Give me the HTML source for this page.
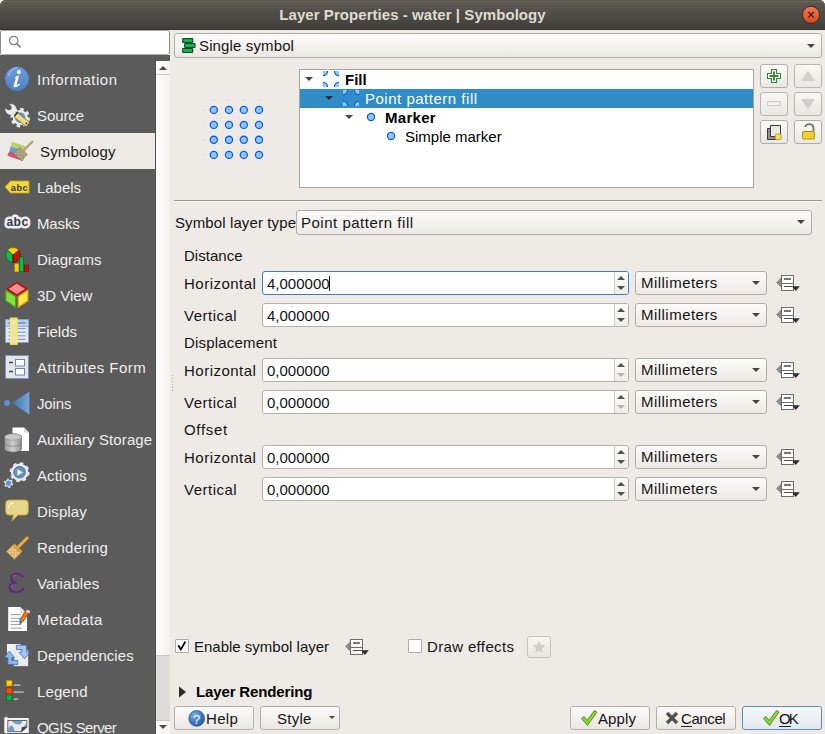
<!DOCTYPE html>
<html><head><meta charset="utf-8">
<style>
*{box-sizing:border-box;margin:0;padding:0}
html,body{width:825px;height:734px;overflow:hidden;background:#ffffff}
body{position:relative;font-family:"Liberation Sans",sans-serif;font-size:15px;color:#141414}
.a{position:absolute}
.t{position:absolute;line-height:17px;white-space:nowrap}
svg{position:absolute;overflow:visible}
#title{left:0;top:0;width:825px;height:30px;border-radius:6px 6px 0 0;background:linear-gradient(#5d5a52,#3f3e3a);box-shadow:inset 0 1px #57544c,inset 0 2px #6b675c,inset 0 -1px #363530;}
#title .tt{left:0;width:825px;text-align:center;top:6px;color:#dfdbd2;font-weight:bold}
#search{left:0;top:30px;width:170px;height:25px;background:#fff;border:1px solid #8e8c88;border-top:1px solid #a9a6a0;border-bottom-color:#b5b2ad;border-radius:2px 3px 3px 2px}
#side{left:0;top:55px;width:170px;height:679px;background:#5b5b5b}
.si{position:absolute;left:37px;color:#eeeeec;line-height:17px;white-space:nowrap}
#panel{left:170px;top:30px;width:655px;height:704px;background:#eeebe7}
.combo{position:absolute;border:1px solid #b1aea9;border-radius:3px;background:linear-gradient(#fcfcfb,#ebe9e5)}
.spin{position:absolute;border:1px solid #b4b1ac;border-radius:3px;background:#fff}
.btn{position:absolute;border:1px solid #b1aea9;border-radius:3px;background:linear-gradient(#fbfbfa,#e9e7e3)}
.arr{position:absolute;width:0;height:0;border-left:4px solid transparent;border-right:4px solid transparent;border-top:4px solid #444}
</style></head><body>
<div id="title" class="a"><div class="t tt" style="letter-spacing:0.06px">Layer Properties - water | Symbology</div>
<svg style="left:801px;top:5px" width="20" height="20" viewBox="0 0 20 20"><defs><linearGradient id="cg" x1="0" y1="0" x2="0" y2="1"><stop offset="0" stop-color="#f47b52"/><stop offset="1" stop-color="#d9461c"/></linearGradient></defs><circle cx="10" cy="9.8" r="8.6" fill="url(#cg)" stroke="#2e2c28" stroke-width="1"/><path d="M7.2 7L12.8 12.6M12.8 7L7.2 12.6" stroke="#2a1a10" stroke-width="1.1"/></svg>
</div>
<div id="side" class="a"></div>
<div class="a" style="left:0;top:133px;width:156px;height:36px;background:#eeebe7"></div>
<svg style="left:0;top:0" width="156" height="734" viewBox="0 0 156 734">
<defs>
<linearGradient id="infog" x1="0" y1="0" x2="0" y2="1"><stop offset="0" stop-color="#6d9ddb"/><stop offset="1" stop-color="#4f82c6"/></linearGradient>
<linearGradient id="joing" x1="0" y1="0" x2="1" y2="0"><stop offset="0" stop-color="#3f6fae"/><stop offset="1" stop-color="#79a6dc"/></linearGradient>
<linearGradient id="dbg" x1="0" y1="0" x2="1" y2="0"><stop offset="0" stop-color="#9a9a9a"/><stop offset="0.5" stop-color="#d0d0d0"/><stop offset="1" stop-color="#8a8a8a"/></linearGradient>
<pattern id="hatch" width="1.5" height="1.5" patternUnits="userSpaceOnUse"><rect width="1.5" height="1.5" fill="#9f9874"/><rect width="0.75" height="0.75" fill="#c4bd9c"/></pattern>
<pattern id="hatch2" width="1.5" height="1.5" patternUnits="userSpaceOnUse"><rect width="1.5" height="1.5" fill="#dfad66"/><rect width="0.75" height="0.75" fill="#f6dcaa"/></pattern>
</defs>
<!-- Information -->
<circle cx="16.9" cy="78.7" r="12" fill="url(#infog)" stroke="#4474b8" stroke-width="0.8"/>
<path d="M8.5 76 Q10 69 17 67.5" stroke="#9cc0ea" stroke-width="1.2" fill="none"/>
<circle cx="18.9" cy="72" r="2" fill="#fff"/>
<path d="M15.2 77.2 Q17 75.6 19.2 75.6 L16.6 84.6 Q18 84.8 19.6 83.6 L19.6 85 Q17 87.4 14.2 87.2 Q13.2 86.8 13.6 85.4 L15.9 78.2 Q15.4 78.1 14.8 78.4 Z" fill="#fff"/>
<!-- Source -->
<circle cx="20.2" cy="117.6" r="8.2" fill="none" stroke="#e9e9e9" stroke-width="3.2" stroke-dasharray="3.4 3.0"/>
<circle cx="20.2" cy="117.6" r="6.4" fill="#6f9ad0" stroke="#ececec" stroke-width="2.2"/>
<circle cx="10.9" cy="109.4" r="5.4" fill="#ececea" stroke="#c8c8c6" stroke-width="0.4"/>
<path d="M14 111.5 L16.8 114.8" stroke="#d8d8d6" stroke-width="3.2"/>
<circle cx="9" cy="107.6" r="2.7" fill="#5b5b5b"/>
<path d="M10.4 105.6 L7.8 102.2 L3.4 106.4 L6.6 109.2 Z" fill="#5b5b5b"/>
<path d="M15.6 114.6 L27.8 124.4" stroke="#7a6a28" stroke-width="6.2" stroke-linecap="butt"/>
<path d="M15.6 114.6 L27.8 124.4" stroke="#eddb80" stroke-width="5"/>
<path d="M14.4 116.2 L17.9 111.8" stroke="#222" stroke-width="1.4"/>
<circle cx="26.4" cy="123.4" r="1.1" fill="#333" stroke="#ddd" stroke-width="0.5"/>
<!-- Symbology -->
<path d="M12 141.8 L25.5 146.3 L23 160.8 L8.5 156 Z" fill="#b8d06e"/>
<path d="M10.6 146.8 L24.6 151.3 L23 160.8 L8.5 156 Z" fill="#5ea4da"/>
<path d="M9.4 151.4 L23.6 156 L22.8 161 L7.2 155.6 Z" fill="#d4506c"/>
<path d="M13.8 153.2 L19.6 147.4 L27.4 154.6 L21.4 160.8 Z" fill="url(#hatch)" stroke="#8a8462" stroke-width="0.6"/>
<path d="M22.6 151.6 L32.2 141.8" stroke="#b1a46c" stroke-width="2.3" stroke-linecap="round"/>
<!-- Labels -->
<path d="M5 187 L10.5 181 L29 181 L29 193 L10.5 193 Z" fill="#f3d83a" stroke="#caa400" stroke-width="0.8"/>
<text x="10.8" y="190.6" font-family="Liberation Sans" font-weight="bold" font-size="9.2" letter-spacing="0.5" fill="#363636">abc</text>
<!-- Masks -->
<text x="6.4" y="226.3" font-family="Liberation Sans" font-weight="bold" font-size="12" letter-spacing="0.5" fill="#3a3a3a" stroke="#eef0f8" stroke-width="5" stroke-linejoin="round" paint-order="stroke">abc</text>
<!-- Diagrams -->
<circle cx="13" cy="255" r="7.3" fill="#ffd200" stroke="#a08000" stroke-width="0.5"/>
<path d="M13 255 L7.6 250.1 A7.3 7.3 0 0 0 13 262.3 Z" fill="#0cba4e" stroke="#08602a" stroke-width="0.9" stroke-linejoin="round"/>
<path d="M13 255 L13 262.3 A7.3 7.3 0 0 0 18.6 250.4 Z" fill="#c81008" stroke="#5e0804" stroke-width="0.9" stroke-linejoin="round"/>
<rect x="14.8" y="263.8" width="4" height="8" fill="#ffcc00" stroke="#c89a00" stroke-width="0.5"/>
<rect x="19.6" y="257" width="4" height="14.8" fill="#0cba4e" stroke="#08602a" stroke-width="0.7"/>
<rect x="24.4" y="265" width="4.2" height="6.8" fill="#c81008" stroke="#701008" stroke-width="0.6"/>
<!-- 3D View -->
<path d="M16.7 282.6 L26.4 288.9 L16.9 295.2 L7.3 288.9 Z" fill="#f69090" stroke="#c80808" stroke-width="1.5" stroke-linejoin="round"/>
<path d="M5.8 290.3 L15.6 296.4 L15.6 307.3 L5.8 300.8 Z" fill="#88e03a" stroke="#4aa014" stroke-width="1.2" stroke-linejoin="round"/>
<path d="M18.2 296.4 L27.9 290.3 L27.9 300.8 L18.2 307.3 Z" fill="#ffe64a" stroke="#d8a800" stroke-width="1.2" stroke-linejoin="round"/>
<!-- Fields -->
<rect x="5.5" y="319.5" width="23" height="23" fill="#e6eaf0" stroke="#7fa2d0" stroke-width="1"/>
<rect x="6" y="320" width="22" height="6" fill="#b9d0ec"/>
<path d="M6 326.5h22" stroke="#8fb0da" stroke-width="1"/>
<path d="M8.5 323h17" stroke="#5f8ac4" stroke-width="1.4"/>
<path d="M8.5 328.6h17M8.5 332.2h17M8.5 335.8h17M8.5 339.4h17" stroke="#5f8ac4" stroke-width="0.9"/>
<rect x="10.6" y="318.2" width="6.4" height="26" fill="#ece2b0" stroke="#f8f03a" stroke-width="1.3"/>
<circle cx="13.7" cy="322.8" r="0.9" fill="#fff"/>
<!-- Attributes Form -->
<rect x="5.5" y="355.5" width="23" height="23" fill="#e5e5e5" stroke="#7496c6" stroke-width="1"/>
<rect x="15.5" y="359.5" width="9" height="6.5" fill="#fff" stroke="#5d8ac4" stroke-width="1"/>
<rect x="15.5" y="368.5" width="9" height="6.5" fill="#fff" stroke="#5d8ac4" stroke-width="1"/>
<path d="M9 362.5h4M9 371.5h4" stroke="#2c4a6a" stroke-width="1.6"/>
<!-- Joins -->
<circle cx="7" cy="403" r="3" fill="#5d8fcf"/>
<path d="M12 403 L29.3 391.5 L29.3 414.5 Z" fill="url(#joing)"/>
<!-- Aux storage -->
<path d="M12.5 427.5 L24 427.5 L29 432.5 L29 451 L12.5 451 Z" fill="#ffffff"/>
<path d="M24 427.5 L24 432.5 L29 432.5" fill="#dcdcdc"/>
<path d="M4.5 437 a8.5 3.2 0 0 1 17 0 L21.5 449 a8.5 3.2 0 0 1 -17 0 Z" fill="url(#dbg)" stroke="#5f5f5f" stroke-width="0.6"/>
<ellipse cx="13" cy="437" rx="8.5" ry="3.2" fill="#c8c8c8" stroke="#777" stroke-width="0.5"/>
<path d="M4.5 443 a8.5 3.2 0 0 0 17 0" fill="none" stroke="#777" stroke-width="0.6"/>
<!-- Actions -->
<circle cx="19.6" cy="472.2" r="9.1" fill="none" stroke="#e8e8e8" stroke-width="1.8" stroke-dasharray="3.6 3.55"/>
<circle cx="19.6" cy="472.2" r="7.2" fill="none" stroke="#ececec" stroke-width="3"/>
<circle cx="19.6" cy="472.2" r="5.9" fill="#5e92d0" stroke="#3a5a88" stroke-width="0.6"/>
<path d="M17.4 469.2 L23 472.4 L17.4 475.6 Z" fill="#fff"/>
<circle cx="8.5" cy="483.2" r="4.2" fill="none" stroke="#e0e0e0" stroke-width="1.1" stroke-dasharray="2.2 2.2"/>
<circle cx="8.5" cy="483.2" r="3.2" fill="#5e92d0" stroke="#e8e8e8" stroke-width="1"/>
<!-- Display -->
<path d="M9 500 L25 500 Q28.3 500 28.3 503.5 L28.3 511.5 Q28.3 515 25 515 L18 515 L12 521 L13.5 515 L9 515 Q5.7 515 5.7 511.5 L5.7 503.5 Q5.7 500 9 500 Z" fill="#e4d88a" stroke="#c7a42a" stroke-width="0.9"/>
<path d="M8.5 508 Q8.5 503 14 503" stroke="#fff" stroke-width="1.2" fill="none"/>
<!-- Rendering -->
<path d="M18.6 546.6 L27.2 538" stroke="#b57a22" stroke-width="3.6" stroke-linecap="round"/>
<path d="M18.6 546.6 L27.2 538" stroke="#e7ad4e" stroke-width="2.4" stroke-linecap="round"/>
<path d="M6.4 551.4 L13.2 544.8 L21.2 552.6 L14.4 559.4 Z" fill="url(#hatch2)" stroke="#c48a34" stroke-width="0.7"/>
<path d="M12.6 545.4 L14.4 543.6 L22.4 551.4 L20.6 553.2 Z" fill="#e2a445" stroke="#b57a22" stroke-width="0.6"/>
<!-- Variables -->
<path d="M22.8 576.6 Q20.5 573.6 16.5 573.8 Q11 574.3 11.2 578.4 Q11.6 582.3 16.8 582.6 Q9.6 582.8 9.6 587.4 Q9.8 591.9 15.8 592 Q21 592.1 23.6 588.6" fill="none" stroke="#5f2a80" stroke-width="2.2" stroke-linecap="round"/><path d="M13 576.5 Q14 575.5 15.5 575.3 M11.3 587 Q11.6 585.5 12.6 585" stroke="#b080c8" stroke-width="0.8" fill="none"/>
<!-- Metadata -->
<path d="M8.2 607 L20.2 607 L27 613.8 L27 631 L8.2 631 Z" fill="#ffffff"/>
<path d="M20.2 607 L20.2 612 Q20.2 613.8 22 613.8 L27 613.8 Z" fill="#dcdcdc"/>
<path d="M10.6 614.6h10.5M10.6 618.2h9.5M10.6 621.4h9M10.6 624.6h10.5M10.6 628.2h11.5" stroke="#8f8f8f" stroke-width="0.9"/>
<path d="M21.2 620.8 L27.8 611.2" stroke="#7a3a10" stroke-width="4.4"/>
<path d="M21.2 620.8 L27.8 611.2" stroke="#ec7b1e" stroke-width="3.2"/>
<path d="M26.6 610.4 L29.8 612.6" stroke="#f4d8d8" stroke-width="2.4"/>
<path d="M19.6 619.6 L22.9 621.9 L19.3 625.3 Z" fill="#6a6a6a"/>
<!-- Dependencies -->
<rect x="7" y="644" width="13.5" height="14" fill="#f0f0f0"/>
<rect x="14" y="650.5" width="14" height="15.5" fill="#ececec" stroke="#d8d8d8" stroke-width="0.4"/>
<path d="M4.2 657.6 L9.4 651.2 L14.6 657.6 L11.8 657.6 L11.8 660.3 L17.7 660.3 L17.7 664.6 L7.9 664.6 L7.9 657.6 Z" fill="#8db4ec" stroke="#3f6fb8" stroke-width="0.8" stroke-linejoin="round"/>
<path d="M16.4 645.2 L26.6 645.2 L26.6 652.3 L29.8 652.3 L24.5 658.8 L19 652.3 L21.8 652.3 L21.8 649.5 L16.4 649.5 Z" fill="#a6c5f2" stroke="#3f6fb8" stroke-width="0.8" stroke-linejoin="round"/>
<!-- Legend -->
<rect x="6.5" y="680.5" width="5.5" height="5.5" fill="#ffcc00" stroke="#c08a00" stroke-width="0.6"/>
<rect x="6.5" y="688" width="5.5" height="5.5" fill="#ff4a00" stroke="#a02a00" stroke-width="0.6"/>
<rect x="6.5" y="695" width="5.5" height="5.5" fill="#12b040" stroke="#0a6020" stroke-width="0.6"/>
<path d="M13.6 685.2h6.8M13.6 692.2h10.2M13.6 699.2h4.6" stroke="#a9a9a9" stroke-width="1.8"/>
<!-- QGIS Server -->
<path d="M6 718 L28.8 718 L28.8 733 L6 733 Z" fill="#f2f2f2"/>
<rect x="4.4" y="717" width="3.4" height="16.3" rx="1.6" fill="#fafafa" stroke="#d0d0d0" stroke-width="0.5"/>
<path d="M7.8 720.5 L26.8 720.5 L26.8 727 L21.5 731.6 L7.8 731.6 Z" fill="#ececec" stroke="#555" stroke-width="0.9"/>
<path d="M12 720.9 L22.5 720.9 Q21.5 724.8 18 724.6 Q15 724.4 13.5 722.8 Q12.5 721.8 12 720.9 Z" fill="#6e9fd8"/>
<path d="M8.2 731.2 L8.2 729 Q10 725 11.8 725.6 Q13.6 726.5 14.6 731.2 Z" fill="#6e9fd8"/>
<path d="M26.4 723.8 Q24.3 724.3 24.2 726.4 L25.5 727 L26.4 726.2 Z" fill="#6e9fd8"/>
<path d="M21.5 731.6 L22 727.3 L26.8 727 Z" fill="#444" stroke="#333" stroke-width="0.6"/>
</svg>
<div class="si" style="top:71px;letter-spacing:0.5px">Information</div>
<div class="si" style="top:107px;letter-spacing:-0.08px">Source</div>
<div class="si" style="top:143px;left:40px;color:#1a1a1a;letter-spacing:0.16px">Symbology</div>
<div class="si" style="top:179px;letter-spacing:-0.04px">Labels</div>
<div class="si" style="top:215px;letter-spacing:-0.15px">Masks</div>
<div class="si" style="top:251px;letter-spacing:0.04px">Diagrams</div>
<div class="si" style="top:287px;letter-spacing:-0.05px">3D View</div>
<div class="si" style="top:323px">Fields</div>
<div class="si" style="top:359px;letter-spacing:0.44px">Attributes Form</div>
<div class="si" style="top:395px;letter-spacing:-0.15px">Joins</div>
<div class="si" style="top:431px;letter-spacing:0.11px">Auxiliary Storage</div>
<div class="si" style="top:467px;letter-spacing:0.1px">Actions</div>
<div class="si" style="top:503px;letter-spacing:0.08px">Display</div>
<div class="si" style="top:539px;letter-spacing:0.2px">Rendering</div>
<div class="si" style="top:575px;letter-spacing:0.1px">Variables</div>
<div class="si" style="top:611px;letter-spacing:0.4px">Metadata</div>
<div class="si" style="top:647px;letter-spacing:0.07px">Dependencies</div>
<div class="si" style="top:683px;letter-spacing:0.1px">Legend</div>
<div class="si" style="top:719px;letter-spacing:-0.6px">QGIS Server</div>
<!-- scrollbar -->
<div class="a" style="left:155px;top:61px;width:1px;height:673px;background:#4e4e4e"></div>
<div class="a" style="left:156px;top:61px;width:14px;height:14px;background:linear-gradient(90deg,#fdfdfc,#f4f3f1);border-bottom:1px solid #c9c6c1"></div>
<div class="arr" style="left:159px;top:66px;border-top:none;border-bottom:4px solid #4a4a4a"></div>
<div class="a" style="left:156px;top:75px;width:14px;height:580px;background:linear-gradient(90deg,#ffffff,#f3f2f0)"></div>
<div class="a" style="left:156px;top:655px;width:14px;height:65px;background:#dedcd8;border-top:1px solid #c9c6c1"></div>
<div class="a" style="left:156px;top:720px;width:14px;height:14px;background:linear-gradient(90deg,#fdfdfc,#f4f3f1);border-top:1px solid #c9c6c1"></div>
<div class="arr" style="left:159px;top:725px;border-top-color:#4a4a4a"></div>

<div id="search" class="a"><svg style="left:7px;top:4px" width="14" height="14" viewBox="0 0 14 14"><circle cx="5.7" cy="5.5" r="4.2" fill="none" stroke="#7d7d7d" stroke-width="1.2"/><path d="M8.6 8.6L12.6 12.4" stroke="#7d7d7d" stroke-width="1.5"/></svg></div>
<div id="panel" class="a"></div>
<svg style="left:171px;top:374px" width="3" height="19" viewBox="0 0 3 19"><g fill="#a9a6a1"><rect x="1" y="1" width="1" height="1"/><rect x="1" y="4" width="1" height="1"/><rect x="1" y="7" width="1" height="1"/><rect x="1" y="10" width="1" height="1"/><rect x="1" y="13" width="1" height="1"/><rect x="1" y="16" width="1" height="1"/></g></svg>
<!-- renderer combo -->
<div class="combo" style="left:174px;top:33px;width:648px;height:25px"></div>
<svg style="left:182px;top:38px" width="14" height="15" viewBox="0 0 14 15"><rect x="0.7" y="0.7" width="10" height="3.6" rx="0.6" fill="#14c45a" stroke="#0d4d26" stroke-width="1.2"/><rect x="2.7" y="5.7" width="10.3" height="3.6" rx="0.6" fill="#14c45a" stroke="#0d4d26" stroke-width="1.2"/><rect x="0.7" y="10.7" width="10" height="3.6" rx="0.6" fill="#14c45a" stroke="#0d4d26" stroke-width="1.2"/></svg>
<div class="t" style="left:199px;top:37px;letter-spacing:0.13px">Single symbol</div>
<div class="arr" style="left:807px;top:44px"></div>
<!-- preview -->
<svg style="left:200px;top:95px" width="75" height="75" viewBox="0 0 75 75">
<g fill="#80cfff" stroke="#1c4ff2" stroke-width="1.3"><circle cx="13.8" cy="14.9" r="3.55"/><circle cx="29.0" cy="14.9" r="3.55"/><circle cx="43.8" cy="14.9" r="3.55"/><circle cx="59.0" cy="14.9" r="3.55"/><circle cx="13.8" cy="29.9" r="3.55"/><circle cx="29.0" cy="29.9" r="3.55"/><circle cx="43.8" cy="29.9" r="3.55"/><circle cx="59.0" cy="29.9" r="3.55"/><circle cx="13.8" cy="44.8" r="3.55"/><circle cx="29.0" cy="44.8" r="3.55"/><circle cx="43.8" cy="44.8" r="3.55"/><circle cx="59.0" cy="44.8" r="3.55"/><circle cx="13.8" cy="59.9" r="3.55"/><circle cx="29.0" cy="59.9" r="3.55"/><circle cx="43.8" cy="59.9" r="3.55"/><circle cx="59.0" cy="59.9" r="3.55"/></g>
<g stroke="#cdd3ea" stroke-width="1"><path d="M12.8 4.5 h2"/><path d="M28.0 4.5 h2"/><path d="M42.8 4.5 h2"/><path d="M58.0 4.5 h2"/><path d="M3.5 13.9 v2"/><path d="M3.5 28.9 v2"/><path d="M3.5 43.8 v2"/><path d="M3.5 58.9 v2"/></g>
</svg>
<!-- tree -->
<div class="a" style="left:299px;top:69px;width:455px;height:119px;background:#fff;border:1px solid #a9a6a1"></div>
<div class="a" style="left:300px;top:89px;width:453px;height:19px;background:#308cc6"></div>
<div class="arr" style="left:305px;top:77px;border-left-width:4.5px;border-right-width:4.5px"></div>
<svg style="left:323px;top:71px;overflow:hidden" width="16" height="16" viewBox="0 0 16 16"><g fill="#80cfff" stroke="#1c4ff2" stroke-width="1.2"><circle cx="0" cy="0" r="4.6"/><circle cx="16" cy="0" r="4.6"/><circle cx="0" cy="16" r="4.6"/><circle cx="16" cy="16" r="4.6"/></g></svg>
<div class="t" style="left:345px;top:71px;font-weight:bold;color:#000">Fill</div>
<div class="arr" style="left:325px;top:96px;border-left-width:4.5px;border-right-width:4.5px;border-top-color:#1e2a33"></div>
<svg style="left:343px;top:90px;overflow:hidden" width="16" height="16" viewBox="0 0 16 16"><g fill="#80cfff" stroke="#1c4ff2" stroke-width="1.2"><circle cx="0" cy="0" r="4.6"/><circle cx="16" cy="0" r="4.6"/><circle cx="0" cy="16" r="4.6"/><circle cx="16" cy="16" r="4.6"/></g></svg>
<div class="t" style="left:365px;top:90px;color:#fff;letter-spacing:0.51px">Point pattern fill</div>
<div class="arr" style="left:345px;top:115px;border-left-width:4.5px;border-right-width:4.5px"></div>
<svg style="left:365px;top:111px" width="12" height="12" viewBox="0 0 12 12"><circle cx="6" cy="6" r="3.6" fill="#80cfff" stroke="#1c4ff2" stroke-width="1.2"/></svg>
<div class="t" style="left:385px;top:109px;font-weight:bold;color:#000;letter-spacing:0.3px">Marker</div>
<svg style="left:385px;top:130px" width="12" height="12" viewBox="0 0 12 12"><circle cx="6" cy="6" r="3.6" fill="#80cfff" stroke="#1c4ff2" stroke-width="1.2"/></svg>
<div class="t" style="left:405px;top:128px;color:#000">Simple marker</div>
<!-- side buttons -->
<div class="btn" style="left:760px;top:64px;width:28px;height:24px"></div>
<svg style="left:766px;top:68px" width="16" height="16" viewBox="0 0 16 16"><path d="M5.5 1.5H10.5V5.5H14.5V10.5H10.5V14.5H5.5V10.5H1.5V5.5H5.5Z" fill="#fff" stroke="#3a843a" stroke-width="1.1"/><path d="M8 3.5V12.5M3.5 8H12.5" stroke="#3a873a" stroke-width="1.9"/></svg>
<div class="btn" style="left:794px;top:64px;width:28px;height:24px;opacity:.85"></div>
<svg style="left:798px;top:69px" width="20" height="14" viewBox="0 0 20 14"><path d="M10 1.5 L17 12 L3 12 Z" fill="#d3d0cb"/></svg>
<div class="btn" style="left:760px;top:92px;width:28px;height:24px;opacity:.85"></div>
<svg style="left:767px;top:100px" width="14" height="8" viewBox="0 0 14 8"><rect x="0.5" y="1.5" width="13" height="4" fill="#f4efef" stroke="#d9c6c6" stroke-width="1"/></svg>
<div class="btn" style="left:794px;top:92px;width:28px;height:24px;opacity:.85"></div>
<svg style="left:798px;top:97px" width="20" height="14" viewBox="0 0 20 14"><path d="M3 2 L17 2 L10 12.5 Z" fill="#d3d0cb"/></svg>
<div class="btn" style="left:760px;top:120px;width:28px;height:24px"></div>
<svg style="left:766px;top:124px" width="16" height="16" viewBox="0 0 16 16"><path d="M1.5 4.5H11.5V15.5H1.5Z" fill="#8f8f88" stroke="#3a3a3a" stroke-width="1"/><path d="M4.5 1.5H14.5V12.5H4.5Z" fill="#e9e9e6" stroke="#3a3a3a" stroke-width="1"/><rect x="9.5" y="10" width="5.5" height="5.5" rx="0.8" fill="#f2dc74" stroke="#c9a400" stroke-width="1"/></svg>
<div class="btn" style="left:794px;top:120px;width:28px;height:24px"></div>
<svg style="left:801px;top:123px" width="16" height="18" viewBox="0 0 16 18"><path d="M4.2 4 Q5 1.2 8.5 1.2 Q12.2 1.4 12.5 5 V8.5" fill="none" stroke="#6f6f6f" stroke-width="1.8"/><path d="M5 3.8 Q6 2.2 8.5 2.2" fill="none" stroke="#e8e8e8" stroke-width="0.7"/><rect x="1.5" y="8.5" width="12" height="7.5" rx="1.5" fill="#f0d22e" stroke="#b39000" stroke-width="1"/></svg>
<!-- separator -->
<div class="a" style="left:174px;top:200px;width:648px;height:1px;background:#9c9994"></div>
<div class="a" style="left:174px;top:201px;width:648px;height:1px;background:#ffffff"></div>
<!-- symbol layer type -->
<div class="t" style="left:175px;top:214px;letter-spacing:0.11px">Symbol layer type</div>
<div class="combo" style="left:296px;top:210px;width:516px;height:25px"></div>
<div class="t" style="left:301px;top:214px;letter-spacing:0.51px">Point pattern fill</div>
<div class="arr" style="left:797px;top:220px"></div>
<div class="t" style="left:184px;top:247px;letter-spacing:0.03px">Distance</div><div class="t" style="left:184px;top:275px;letter-spacing:0.49px">Horizontal</div><div class="spin" style="left:262px;top:271px;width:367px;height:24px;border-color:#3a7fc1"></div><div class="a" style="left:614px;top:272px;width:1px;height:22px;background:#cfccc7"></div><div class="a" style="left:615px;top:272px;width:13px;height:22px;background:linear-gradient(#fbfbfa,#f0eeeb);border-radius:0 2px 2px 0"></div><div class="arr" style="left:617px;top:276px;border-top:none;border-bottom:4px solid #505050"></div><div class="arr" style="left:617px;top:286px;border-top:4px solid #505050"></div><div class="t" style="left:267px;top:275px">4,000000</div><div class="a" style="left:329px;top:276px;width:1px;height:15px;background:#111"></div><div class="combo" style="left:635px;top:271px;width:132px;height:24px"></div><div class="t" style="left:641px;top:274px;letter-spacing:0.47px">Millimeters</div><div class="arr" style="left:752px;top:281px"></div><svg style="left:776px;top:275px" width="25" height="17" viewBox="0 0 25 17"><path d="M0.5 7.5 L5.5 2.5 L5.5 12.5 Z" fill="#8d8d8d" stroke="#6a6a6a" stroke-width="0.5"/><rect x="5.5" y="0.5" width="12" height="15" fill="#fff" stroke="#6d6d6d" stroke-width="1"/><path d="M5.5 8.5h12" stroke="#6d6d6d" stroke-width="1"/><path d="M8 4h7" stroke="#4a4a4a" stroke-width="1.5"/><path d="M8 11.5h8" stroke="#4a4a4a" stroke-width="1"/><path d="M15.8 11.3 L23.8 11.3 L19.8 16 Z" fill="#2e2e2e"/></svg><div class="t" style="left:184px;top:307px;letter-spacing:0.5px">Vertical</div><div class="spin" style="left:262px;top:303px;width:367px;height:24px;border-color:#b4b1ac"></div><div class="a" style="left:614px;top:304px;width:1px;height:22px;background:#cfccc7"></div><div class="a" style="left:615px;top:304px;width:13px;height:22px;background:linear-gradient(#fbfbfa,#f0eeeb);border-radius:0 2px 2px 0"></div><div class="arr" style="left:617px;top:308px;border-top:none;border-bottom:4px solid #505050"></div><div class="arr" style="left:617px;top:318px;border-top:4px solid #505050"></div><div class="t" style="left:267px;top:307px">4,000000</div><div class="combo" style="left:635px;top:303px;width:132px;height:24px"></div><div class="t" style="left:641px;top:306px;letter-spacing:0.47px">Millimeters</div><div class="arr" style="left:752px;top:313px"></div><svg style="left:776px;top:307px" width="25" height="17" viewBox="0 0 25 17"><path d="M0.5 7.5 L5.5 2.5 L5.5 12.5 Z" fill="#8d8d8d" stroke="#6a6a6a" stroke-width="0.5"/><rect x="5.5" y="0.5" width="12" height="15" fill="#fff" stroke="#6d6d6d" stroke-width="1"/><path d="M5.5 8.5h12" stroke="#6d6d6d" stroke-width="1"/><path d="M8 4h7" stroke="#4a4a4a" stroke-width="1.5"/><path d="M8 11.5h8" stroke="#4a4a4a" stroke-width="1"/><path d="M15.8 11.3 L23.8 11.3 L19.8 16 Z" fill="#2e2e2e"/></svg><div class="t" style="left:184px;top:334px;letter-spacing:0.18px">Displacement</div><div class="t" style="left:184px;top:362px;letter-spacing:0.49px">Horizontal</div><div class="spin" style="left:262px;top:358px;width:367px;height:24px;border-color:#b4b1ac"></div><div class="a" style="left:614px;top:359px;width:1px;height:22px;background:#cfccc7"></div><div class="a" style="left:615px;top:359px;width:13px;height:22px;background:linear-gradient(#fbfbfa,#f0eeeb);border-radius:0 2px 2px 0"></div><div class="arr" style="left:617px;top:363px;border-top:none;border-bottom:4px solid #505050"></div><div class="arr" style="left:617px;top:373px;border-top:4px solid #b5b3ae"></div><div class="t" style="left:267px;top:362px">0,000000</div><div class="combo" style="left:635px;top:358px;width:132px;height:24px"></div><div class="t" style="left:641px;top:361px;letter-spacing:0.47px">Millimeters</div><div class="arr" style="left:752px;top:368px"></div><svg style="left:776px;top:362px" width="25" height="17" viewBox="0 0 25 17"><path d="M0.5 7.5 L5.5 2.5 L5.5 12.5 Z" fill="#8d8d8d" stroke="#6a6a6a" stroke-width="0.5"/><rect x="5.5" y="0.5" width="12" height="15" fill="#fff" stroke="#6d6d6d" stroke-width="1"/><path d="M5.5 8.5h12" stroke="#6d6d6d" stroke-width="1"/><path d="M8 4h7" stroke="#4a4a4a" stroke-width="1.5"/><path d="M8 11.5h8" stroke="#4a4a4a" stroke-width="1"/><path d="M15.8 11.3 L23.8 11.3 L19.8 16 Z" fill="#2e2e2e"/></svg><div class="t" style="left:184px;top:394px;letter-spacing:0.5px">Vertical</div><div class="spin" style="left:262px;top:390px;width:367px;height:24px;border-color:#b4b1ac"></div><div class="a" style="left:614px;top:391px;width:1px;height:22px;background:#cfccc7"></div><div class="a" style="left:615px;top:391px;width:13px;height:22px;background:linear-gradient(#fbfbfa,#f0eeeb);border-radius:0 2px 2px 0"></div><div class="arr" style="left:617px;top:395px;border-top:none;border-bottom:4px solid #505050"></div><div class="arr" style="left:617px;top:405px;border-top:4px solid #b5b3ae"></div><div class="t" style="left:267px;top:394px">0,000000</div><div class="combo" style="left:635px;top:390px;width:132px;height:24px"></div><div class="t" style="left:641px;top:393px;letter-spacing:0.47px">Millimeters</div><div class="arr" style="left:752px;top:400px"></div><svg style="left:776px;top:394px" width="25" height="17" viewBox="0 0 25 17"><path d="M0.5 7.5 L5.5 2.5 L5.5 12.5 Z" fill="#8d8d8d" stroke="#6a6a6a" stroke-width="0.5"/><rect x="5.5" y="0.5" width="12" height="15" fill="#fff" stroke="#6d6d6d" stroke-width="1"/><path d="M5.5 8.5h12" stroke="#6d6d6d" stroke-width="1"/><path d="M8 4h7" stroke="#4a4a4a" stroke-width="1.5"/><path d="M8 11.5h8" stroke="#4a4a4a" stroke-width="1"/><path d="M15.8 11.3 L23.8 11.3 L19.8 16 Z" fill="#2e2e2e"/></svg><div class="t" style="left:184px;top:421px;letter-spacing:0.68px">Offset</div><div class="t" style="left:184px;top:449px;letter-spacing:0.49px">Horizontal</div><div class="spin" style="left:262px;top:445px;width:367px;height:24px;border-color:#b4b1ac"></div><div class="a" style="left:614px;top:446px;width:1px;height:22px;background:#cfccc7"></div><div class="a" style="left:615px;top:446px;width:13px;height:22px;background:linear-gradient(#fbfbfa,#f0eeeb);border-radius:0 2px 2px 0"></div><div class="arr" style="left:617px;top:450px;border-top:none;border-bottom:4px solid #505050"></div><div class="arr" style="left:617px;top:460px;border-top:4px solid #505050"></div><div class="t" style="left:267px;top:449px">0,000000</div><div class="combo" style="left:635px;top:445px;width:132px;height:24px"></div><div class="t" style="left:641px;top:448px;letter-spacing:0.47px">Millimeters</div><div class="arr" style="left:752px;top:455px"></div><svg style="left:776px;top:449px" width="25" height="17" viewBox="0 0 25 17"><path d="M0.5 7.5 L5.5 2.5 L5.5 12.5 Z" fill="#8d8d8d" stroke="#6a6a6a" stroke-width="0.5"/><rect x="5.5" y="0.5" width="12" height="15" fill="#fff" stroke="#6d6d6d" stroke-width="1"/><path d="M5.5 8.5h12" stroke="#6d6d6d" stroke-width="1"/><path d="M8 4h7" stroke="#4a4a4a" stroke-width="1.5"/><path d="M8 11.5h8" stroke="#4a4a4a" stroke-width="1"/><path d="M15.8 11.3 L23.8 11.3 L19.8 16 Z" fill="#2e2e2e"/></svg><div class="t" style="left:184px;top:481px;letter-spacing:0.5px">Vertical</div><div class="spin" style="left:262px;top:477px;width:367px;height:24px;border-color:#b4b1ac"></div><div class="a" style="left:614px;top:478px;width:1px;height:22px;background:#cfccc7"></div><div class="a" style="left:615px;top:478px;width:13px;height:22px;background:linear-gradient(#fbfbfa,#f0eeeb);border-radius:0 2px 2px 0"></div><div class="arr" style="left:617px;top:482px;border-top:none;border-bottom:4px solid #505050"></div><div class="arr" style="left:617px;top:492px;border-top:4px solid #505050"></div><div class="t" style="left:267px;top:481px">0,000000</div><div class="combo" style="left:635px;top:477px;width:132px;height:24px"></div><div class="t" style="left:641px;top:480px;letter-spacing:0.47px">Millimeters</div><div class="arr" style="left:752px;top:487px"></div><svg style="left:776px;top:481px" width="25" height="17" viewBox="0 0 25 17"><path d="M0.5 7.5 L5.5 2.5 L5.5 12.5 Z" fill="#8d8d8d" stroke="#6a6a6a" stroke-width="0.5"/><rect x="5.5" y="0.5" width="12" height="15" fill="#fff" stroke="#6d6d6d" stroke-width="1"/><path d="M5.5 8.5h12" stroke="#6d6d6d" stroke-width="1"/><path d="M8 4h7" stroke="#4a4a4a" stroke-width="1.5"/><path d="M8 11.5h8" stroke="#4a4a4a" stroke-width="1"/><path d="M15.8 11.3 L23.8 11.3 L19.8 16 Z" fill="#2e2e2e"/></svg>
<!-- bottom -->
<div class="a" style="left:175px;top:639px;width:14px;height:14px;background:#fff;border:1px solid #aeaba6;border-radius:1px"></div>
<svg style="left:176px;top:640px" width="12" height="12" viewBox="0 0 12 12"><path d="M2.3 5.2 L4.8 9.6 L9.3 1.6" fill="none" stroke="#000" stroke-width="1.8" stroke-linejoin="round"/></svg>
<div class="t" style="left:194px;top:638px">Enable symbol layer</div>
<svg style="left:345px;top:639px" width="25" height="17" viewBox="0 0 25 17"><path d="M0.5 7.5 L5.5 2.5 L5.5 12.5 Z" fill="#8d8d8d" stroke="#6a6a6a" stroke-width="0.5"/><rect x="5.5" y="0.5" width="12" height="15" fill="#fff" stroke="#6d6d6d" stroke-width="1"/><path d="M5.5 8.5h12" stroke="#6d6d6d" stroke-width="1"/><path d="M8 4h7" stroke="#4a4a4a" stroke-width="1.5"/><path d="M8 11.5h8" stroke="#4a4a4a" stroke-width="1"/><path d="M15.8 11.3 L23.8 11.3 L19.8 16 Z" fill="#2e2e2e"/></svg>
<div class="a" style="left:408px;top:639px;width:14px;height:14px;background:#fff;border:1px solid #aeaba6;border-radius:1px"></div>
<div class="t" style="left:427px;top:638px;letter-spacing:0.35px">Draw effects</div>
<div class="btn" style="left:527px;top:636px;width:24px;height:22px;background:linear-gradient(#f7f6f4,#e8e6e2);border-color:#c6c3be"></div>
<svg style="left:531px;top:639px" width="16" height="16" viewBox="0 0 16 16"><path d="M8 1.5 L9.9 5.8 L14.5 6.2 L11 9.2 L12 13.8 L8 11.4 L4 13.8 L5 9.2 L1.5 6.2 L6.1 5.8 Z" fill="#d2cfc5"/></svg>
<svg style="left:178px;top:686px" width="9" height="12" viewBox="0 0 9 12"><path d="M1 0.5 L8 6 L1 11.5 Z" fill="#2a2a2a"/></svg>
<div class="t" style="left:196px;top:683px;font-weight:bold;color:#000;letter-spacing:-0.14px">Layer Rendering</div>
<div class="btn" style="left:174px;top:706px;width:80px;height:24px"></div>
<svg style="left:188px;top:710px" width="17" height="17" viewBox="0 0 17 17"><defs><radialGradient id="hg" cx="0.35" cy="0.3" r="0.8"><stop offset="0" stop-color="#7db0e6"/><stop offset="0.6" stop-color="#3b76be"/><stop offset="1" stop-color="#25558f"/></radialGradient></defs><circle cx="8.7" cy="8.4" r="7.9" fill="url(#hg)" stroke="#23508a" stroke-width="0.7"/><text x="4.9" y="13.6" font-family="Liberation Sans" font-size="13" fill="#fff">?</text></svg>
<div class="t" style="left:206px;top:710px;letter-spacing:0.33px">Help</div>
<div class="btn" style="left:260px;top:706px;width:80px;height:24px"></div>
<div class="t" style="left:277px;top:710px;letter-spacing:0.25px">Style</div>
<div class="arr" style="left:328.5px;top:716px;border-left-width:3.5px;border-right-width:3.5px;border-top-width:3.5px"></div>
<div class="btn" style="left:570px;top:706px;width:80px;height:24px"></div>
<svg style="left:580px;top:709px" width="18" height="18" viewBox="0 0 18 18"><path d="M1.5 9.5 L4 7.5 L7 11.5 L14.5 1.5 L17 3 L7.5 16.5 Z" fill="#8fd13a" stroke="#4a8a10" stroke-width="0.9" stroke-linejoin="round"/></svg>
<div class="t" style="left:598px;top:710px;letter-spacing:0.12px">Apply</div>
<div class="btn" style="left:656px;top:706px;width:80px;height:24px"></div>
<svg style="left:665px;top:711px" width="14" height="14" viewBox="0 0 14 14"><path d="M2 2 L12 12 M12 2 L2 12" stroke="#505050" stroke-width="3.2"/></svg>
<div class="t" style="left:681px;top:710px;letter-spacing:-0.4px">Cancel</div>
<div class="a" style="left:681px;top:726px;width:11px;height:1px;background:#202020"></div>
<div class="btn" style="left:742px;top:706px;width:80px;height:24px;border-color:#5b8cc0;background:linear-gradient(#f6f8fa,#e3e8ee)"></div>
<svg style="left:762px;top:709px" width="18" height="18" viewBox="0 0 18 18"><path d="M1.5 9.5 L4 7.5 L7 11.5 L14.5 1.5 L17 3 L7.5 16.5 Z" fill="#8fd13a" stroke="#4a8a10" stroke-width="0.9" stroke-linejoin="round"/></svg>
<div class="t" style="left:779px;top:710px;letter-spacing:-2.0px">OK</div>
<div class="a" style="left:779px;top:726px;width:12px;height:1px;background:#202020"></div>

</body></html>
